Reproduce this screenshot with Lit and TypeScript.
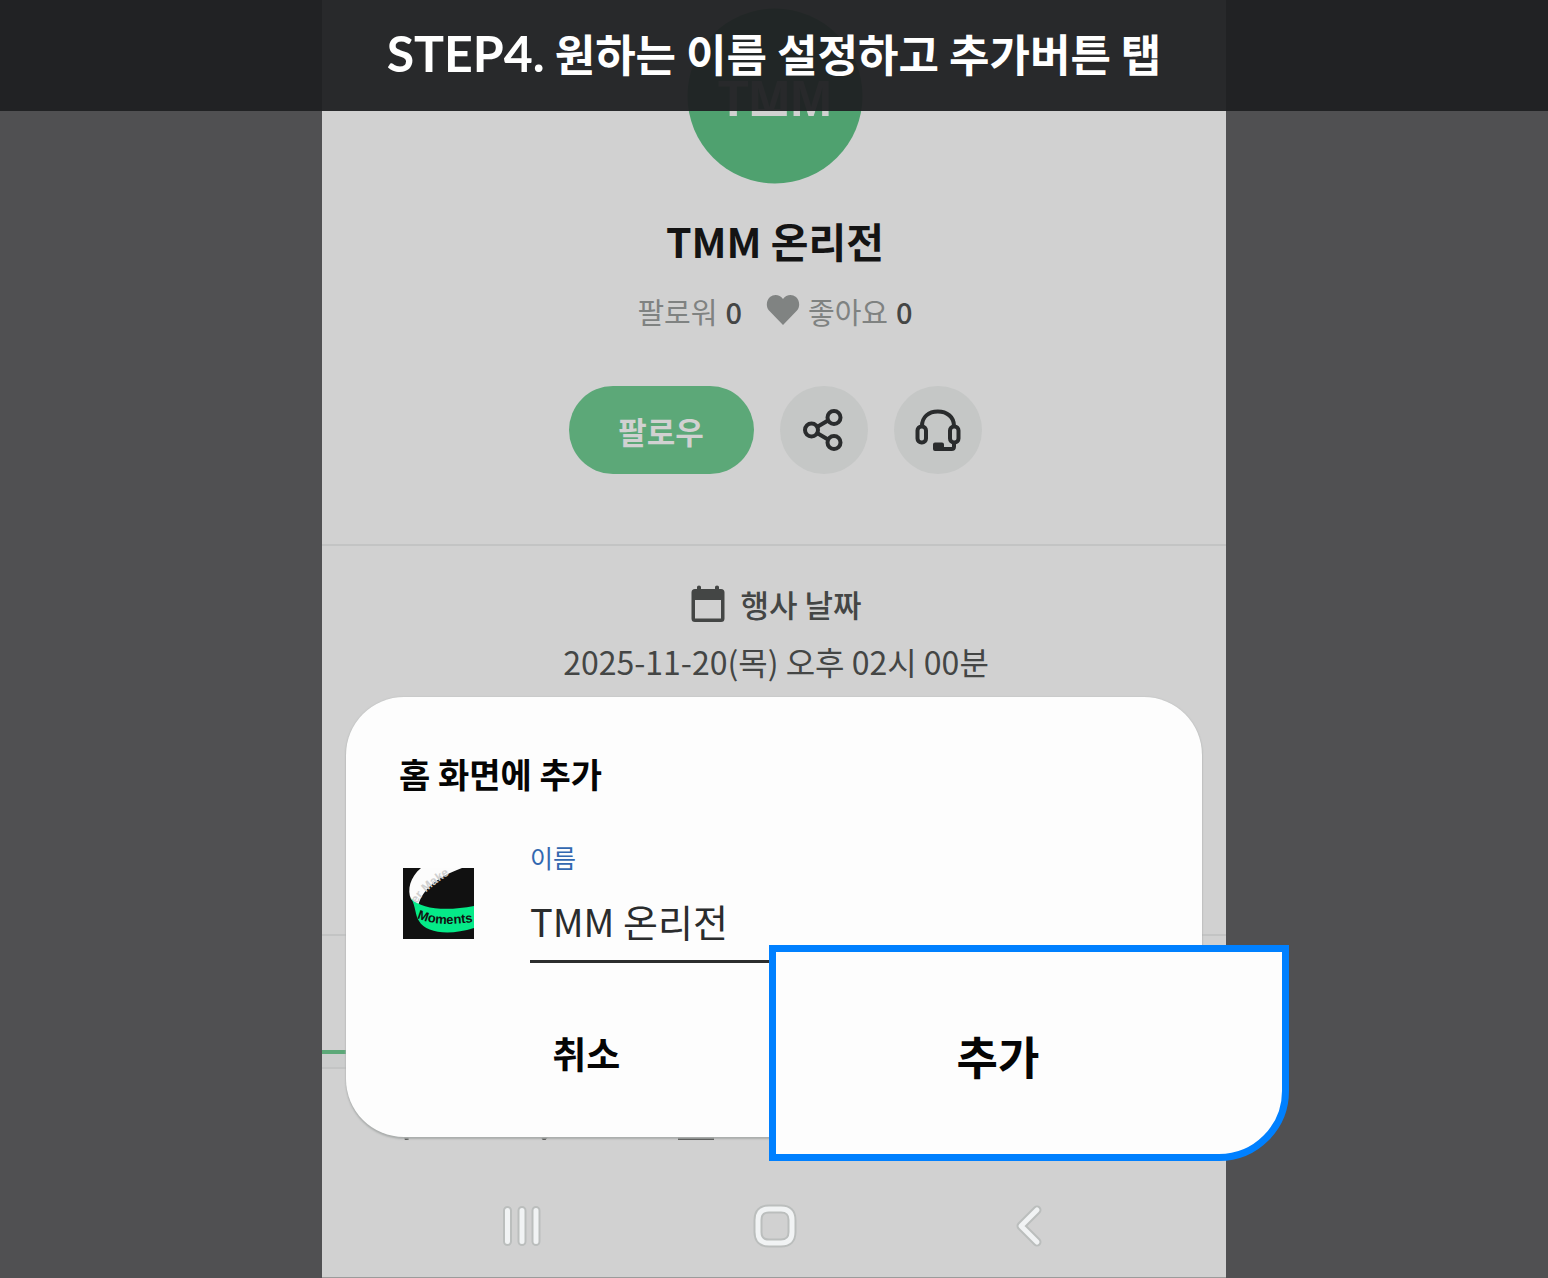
import { LitElement, html, css } from "lit";
import { customElement, state } from "lit/decorators.js";

@customElement("profile-header")
class ProfileHeader extends LitElement {
  static styles = css`
    :host { display: flex; flex-direction: column; align-items: center; padding: 8px 0 70px 2px; color: #141414; }
    .avatar { width: 176px; height: 176px; display: block; }
    h2 { margin: 26px 0 0; font-size: 41px; line-height: 60px; font-weight: 700; }
    .stats { display: flex; align-items: center; margin-top: 21px; font-size: 29px; line-height: 40px; color: #7f8281; }
    .stats b { font-weight: 500; color: #444645; margin-left: 8px; }
    .heart { width: 34px; height: 32px; margin: 0 8px 2px 24px; }
    .actions { display: flex; gap: 26px; margin-top: 55px; }
    button { font: inherit; border: 0; padding: 0; margin: 0; cursor: pointer; }
    .follow { width: 185px; height: 88px; border-radius: 44px; background: #5ca878; color: #d1d1d1; font-size: 31px; font-weight: 700; }
    .round { width: 88px; height: 88px; border-radius: 50%; background: #c5c7c6; display: grid; place-items: center; }
    .round svg { width: 48px; height: 48px; fill: none; stroke: #2a2c2d; stroke-width: 4; stroke-linejoin: round; }
    .logo { font: 700 50px "Liberation Sans", sans-serif; fill: #d1d1d1; }
  `;
  render() {
    return html`
      <svg class="avatar" viewBox="0 0 176 176" role="img" aria-label="TMM">
        <circle cx="88" cy="88" r="87.5" fill="#4fa16f" />
        <text class="logo" x="31" y="108">TMM</text>
        <rect x="65" y="101" width="34" height="7" fill="#d1d1d1" />
      </svg>
      <h2>TMM 온리전</h2>
      <div class="stats">
        <span>팔로워</span><b>0</b>
        <svg class="heart" viewBox="0 0 34 32" aria-hidden="true">
          <path fill="#808382" d="M17 31 3 16.500C-.5 12.500.5 6 4 3c4-3.500 10-2.500 13 2 3-4.500 9-5.500 13-2 3.500 3 4.500 9.500 1 13.500Z" />
        </svg>
        <span>좋아요</span><b>0</b>
      </div>
      <div class="actions">
        <button class="follow">팔로우</button>
        <button class="round" aria-label="공유">
          <svg viewBox="0 0 48 48">
            <path d="m17 21 11-6.500M17 27l11 6.500" />
            <circle cx="11.500" cy="24" r="6.500" /><circle cx="34" cy="11.500" r="6.500" /><circle cx="34" cy="36.500" r="6.500" />
          </svg>
        </button>
        <button class="round" aria-label="문의">
          <svg viewBox="0 0 48 48">
            <path d="M8 20C8 11 14.500 5.500 23.800 5.500S40 11 40 20M40 38v2.500q0 2.500-2.500 2.500H24" />
            <rect x="3.500" y="20.500" width="8.500" height="16" rx="4" /><rect x="36" y="20.500" width="8.500" height="16" rx="4" />
            <rect x="21" y="38.500" width="7" height="4.500" fill="#2a2c2d" />
          </svg>
        </button>
      </div>
    `;
  }
}

@customElement("shortcut-dialog")
class ShortcutDialog extends LitElement {
  @state() private name = "TMM 온리전";

  static styles = css`
    :host { display: block; box-sizing: border-box; background: #fdfdfd; border-radius: 58px; padding: 53px 54px 54px 53px; color: #050505; box-shadow: 0 2px 2px #aaadac, 0 0 2px #b8bab9; }
    h3 { margin: 0; font-size: 34px; line-height: 48px; font-weight: 700; }
    .field { display: grid; grid-template-columns: 75px 1fr; column-gap: 56px; align-items: center; margin-top: 41px; }
    .thumb { width: 71px; height: 71px; margin: 4px 0 0 4px; display: block; }
    .entry { display: flex; flex-direction: column; }
    label { font-size: 25px; line-height: 36px; color: #3368b0; }
    input { font: inherit; font-size: 38px; line-height: 52px; height: 88px; box-sizing: border-box; width: 100%; border: 0; border-bottom: 3px solid #2c2e2e; border-radius: 0; padding: 6px 0 0; background: none; color: #2a2c2d; outline: 0; }
    .buttons { display: grid; grid-template-columns: 1fr 1fr; margin-top: 60px; }
    button { font: inherit; font-weight: 700; color: inherit; background: none; border: 0; padding: 0; cursor: pointer; }
    .cancel { font-size: 37px; line-height: 60px; }
    .add { position: absolute; right: -87px; bottom: -24px; width: 520px; height: 216px; box-sizing: border-box; background: #fdfdfd; border: 7px solid #0080ff; border-radius: 0 0 70px 0; font-size: 45px; padding: 4px 62px 0 0; }
    .white-text { font: 700 12px "Liberation Sans", sans-serif; fill: #cfcfcf; }
    .green-text { font: 700 13px "Liberation Sans", sans-serif; fill: #111; }
  `;
  render() {
    return html`
      <h3>홈 화면에 추가</h3>
      <div class="field">
        <svg class="thumb" viewBox="0 0 71 71" role="img" aria-label="Moments Maker">
          <defs>
            <path id="upper" d="M14 36Q22 21 52 3" />
            <path id="lower" d="M14 50Q36 60 76 53" />
          </defs>
          <rect width="71" height="71" fill="#111" />
          <path fill="#fcfcfc" d="M18 0C7 9 4 22 8 31l7 7C20 20 35 9 59 0Z" />
          <path fill="#05ea88" d="M8 30C18 42 45 43 71 38v22C46 68 23 65 16 53 12 47 13 39 8 30Z" />
          <text class="white-text"><textPath href="#upper">er Make</textPath></text>
          <text class="green-text"><textPath href="#lower">Moments</textPath></text>
        </svg>
        <div class="entry">
          <label for="name">이름</label>
          <input id="name" .value=${this.name} @input=${(e: Event) => (this.name = (e.target as HTMLInputElement).value)} />
        </div>
      </div>
      <div class="buttons">
        <button class="cancel">취소</button>
      </div>
      <button class="add">추가</button>
    `;
  }
}

@customElement("system-nav")
class SystemNav extends LitElement {
  static styles = css`
    :host { display: grid; grid-template-columns: repeat(3, 28%); justify-content: center; justify-items: center; padding: 25px 0 27px 2px; border-bottom: 1px solid #9b9b9b; }
    button { border: 0; padding: 0; background: none; width: 48px; height: 48px; cursor: pointer; }
    svg { width: 48px; height: 48px; display: block; fill: none; stroke-linecap: round; stroke-linejoin: round; }
    .edge { stroke: #bbbebd; stroke-width: 9; }
    .core { stroke: #f1f3f4; stroke-width: 5; }
  `;
  private icon(d: string) {
    return html`<svg viewBox="0 0 48 48" aria-hidden="true"><path class="edge" d=${d} /><path class="core" d=${d} /></svg>`;
  }
  render() {
    const home = "M18 7H30Q41 7 41 18V30Q41 41 30 41H18Q7 41 7 30V18Q7 7 18 7Z";
    return html`
      <button aria-label="최근 앱">${this.icon("M9.500 8.500V39.500M24 8.500V39.500M38 8.500V39.500")}</button>
      <button aria-label="홈">${this.icon(home)}</button>
      <button aria-label="뒤로">${this.icon("M33 8 17 24 33 40")}</button>
    `;
  }
}

@customElement("app-root")
class AppRoot extends LitElement {
  static styles = css`
    :host { display: block; position: relative; min-height: 100vh; background: #505052; font-family: "Noto Sans CJK KR", "Noto Sans", sans-serif; overflow: hidden; }
    .banner { position: absolute; inset: 0 0 auto; z-index: 2; background: rgba(31, 32, 34, 0.95); color: #fff; text-align: center; }
    h1 { margin: 0; font-size: 44px; line-height: 67px; font-weight: 700; padding: 20px 0 24px; }
    .step { font-family: Lato, sans-serif; font-size: 50px; line-height: 1; }
    .phone { position: relative; width: 58.4%; min-height: 100vh; margin: 0 auto; background: #d1d1d1; display: flex; flex-direction: column; }
    .event { border-top: 2px solid #c3c4c4; border-bottom: 2px solid #c3c4c4; padding: 36px 0 251px 4px; display: flex; flex-direction: column; align-items: center; color: #444645; }
    .event-title { display: flex; align-items: center; gap: 14px; font-size: 31px; line-height: 44px; font-weight: 500; }
    .calendar { width: 36px; height: 40px; }
    .event-date { font-size: 32px; line-height: 44px; margin-top: 13px; }
    .tabs { height: 114px; border-bottom: 4px solid #5ca878; }
    .strip { height: 13px; background: #cccdcd; border-bottom: 2px solid #c3c4c4; }
    .toolbar { display: flex; align-items: flex-end; height: 71px; padding-left: 76px; gap: 116px; }
    .toolbar svg { width: 24px; height: 32px; fill: none; stroke: #444645; stroke-width: 4; }
    .toolbar .tabs-icon { width: 36px; }
    system-nav { margin-top: auto; }
    shortcut-dialog { position: absolute; left: 24px; right: 24px; bottom: 141px; z-index: 1; }
  `;
  render() {
    return html`
      <header class="banner"><h1><span class="step">STEP4.</span> 원하는 이름 설정하고 추가버튼 탭</h1></header>
      <main class="phone">
        <profile-header></profile-header>
        <section class="event">
          <div class="event-title">
            <svg class="calendar" viewBox="0 0 36 40" aria-hidden="true">
              <path fill="#444645" fill-rule="evenodd" d="M5 5H7V3Q7 1.500 9 1.500T11 3V5H25V3Q25 1.500 27 1.500T29 3V5H31Q34.500 5 34.500 8.500V34.500Q34.500 38 31 38H5Q1.500 38 1.500 34.500V8.500Q1.500 5 5 5ZM5 16V34.500H31V16Z" />
            </svg>
            <span>행사 날짜</span>
          </div>
          <div class="event-date">2025-11-20(목) 오후 02시 00분</div>
        </section>
        <div class="tabs"></div>
        <div class="strip"></div>
        <div class="toolbar" aria-hidden="true">
          <svg viewBox="0 0 24 32"><path d="M20 2 4 16 9 32" /></svg>
          <svg viewBox="0 0 24 32"><path d="m4 2 14 14L5 32" /></svg>
          <svg class="tabs-icon" viewBox="0 0 36 32"><path d="M2 2H34V30H2Z" /></svg>
        </div>
        <system-nav></system-nav>
        <shortcut-dialog></shortcut-dialog>
      </main>
    `;
  }
}
